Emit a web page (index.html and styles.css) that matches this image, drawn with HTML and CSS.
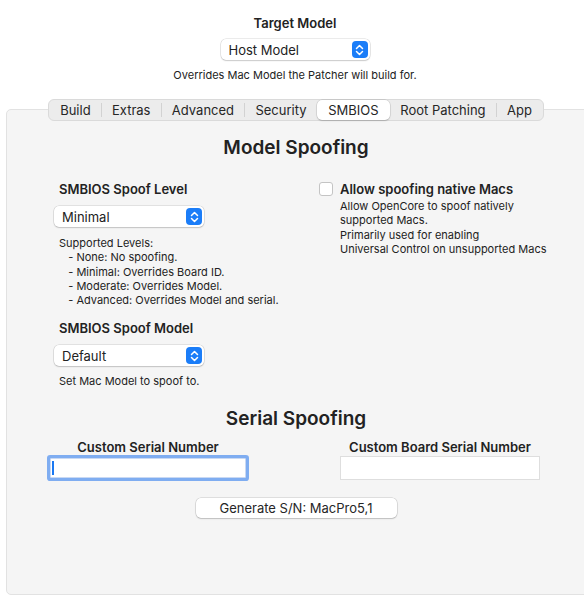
FILE: index.html
```html
<!DOCTYPE html>
<html>
<head>
<meta charset="utf-8">
<link rel="stylesheet" href="styles.css">
</head>
<body>
<div class="top">
  <div class="title">Target Model</div>
  <div class="select host">
    <span class="sel-text">Host Model</span>
    <span class="stepper"><svg width="9" height="12" viewBox="0 0 9 12"><path d="M1.5 4.5 L4.5 1.5 L7.5 4.5 M1.5 7.5 L4.5 10.5 L7.5 7.5" fill="none" stroke="#fff" stroke-width="1.5" stroke-linecap="round" stroke-linejoin="round"/></svg></span>
  </div>
  <div class="note">Overrides Mac Model the Patcher will build for.</div>
</div>
<div class="tabs-wrap">
  <div class="tabs">
    <span class="tab">Build</span><span class="sep"></span>
    <span class="tab">Extras</span><span class="sep"></span>
    <span class="tab">Advanced</span><span class="sep"></span>
    <span class="tab">Security</span>
    <span class="tab active">SMBIOS</span>
    <span class="tab">Root Patching</span><span class="sep"></span>
    <span class="tab">App</span>
  </div>
</div>
<div class="panel">
  <h2 class="section">Model Spoofing</h2>
  <div class="cols">
    <div class="col-left">
      <div class="label">SMBIOS Spoof Level</div>
      <div class="select small s1">
        <span class="sel-text">Minimal</span>
        <span class="stepper"><svg width="9" height="12" viewBox="0 0 9 12"><path d="M1.5 4.5 L4.5 1.5 L7.5 4.5 M1.5 7.5 L4.5 10.5 L7.5 7.5" fill="none" stroke="#fff" stroke-width="1.5" stroke-linecap="round" stroke-linejoin="round"/></svg></span>
      </div>
      <div class="desc levels">Supported Levels:<br>&nbsp;&nbsp;&nbsp;- None: No spoofing.<br>&nbsp;&nbsp;&nbsp;- Minimal: Overrides Board ID.<br>&nbsp;&nbsp;&nbsp;- Moderate: Overrides Model.<br>&nbsp;&nbsp;&nbsp;- Advanced: Overrides Model and serial.</div>
      <div class="label label2">SMBIOS Spoof Model</div>
      <div class="select small s2">
        <span class="sel-text">Default</span>
        <span class="stepper"><svg width="9" height="12" viewBox="0 0 9 12"><path d="M1.5 4.5 L4.5 1.5 L7.5 4.5 M1.5 7.5 L4.5 10.5 L7.5 7.5" fill="none" stroke="#fff" stroke-width="1.5" stroke-linecap="round" stroke-linejoin="round"/></svg></span>
      </div>
      <div class="desc model-desc">Set Mac Model to spoof to.</div>
    </div>
    <div class="col-right">
      <div class="check-row">
        <span class="checkbox"></span>
        <span class="label">Allow spoofing native Macs</span>
      </div>
      <div class="desc check-desc">Allow OpenCore to spoof natively<br>supported Macs.<br>Primarily used for enabling<br>Universal Control on unsupported Macs</div>
    </div>
  </div>
  <h2 class="section section2">Serial Spoofing</h2>
  <div class="serials">
    <div class="field f1">
      <div class="flabel">Custom Serial Number</div>
      <div class="input focus"><span class="caret"></span></div>
    </div>
    <div class="field f2">
      <div class="flabel">Custom Board Serial Number</div>
      <div class="input"></div>
    </div>
  </div>
  <div class="btn-row"><button class="btn">Generate S/N: MacPro5,1</button></div>
</div>
</body>
</html>
```
FILE: styles.css
```css
html, body {
  margin: 0;
  padding: 0;
  background: #ffffff;
  overflow: hidden;
  width: 584px;
  height: 600px;
}
body {
  font-family: Inter, "Liberation Sans", Arial, sans-serif;
  color: #222;
}
.top {
  display: flex;
  flex-direction: column;
  align-items: center;
  padding-top: 15px;
  margin-left: 6px;
}
.title {
  font-weight: 600;
  font-size: 13px;
  line-height: 16px;
  height: 16px;
}
.select {
  display: flex;
  align-items: center;
  justify-content: space-between;
  background: #fff;
  border-radius: 5px;
  box-shadow: 0 0 0 0.5px rgba(0,0,0,0.16), 0 1px 1.5px rgba(0,0,0,0.14);
  height: 21px;
  box-sizing: border-box;
  padding: 0 2px 0 8px;
  font-size: 13px;
}
.select.host {
  width: 149px;
  margin-top: 8px;
}
.stepper {
  width: 16px;
  height: 17px;
  background: #1b7df8;
  border-radius: 4px;
  display: flex;
  align-items: center;
  justify-content: center;
}
.note {
  font-size: 11px;
  line-height: 14px;
  margin-top: 8px;
}
.tabs-wrap {
  display: flex;
  justify-content: center;
  margin-top: 17px;
  margin-left: 8px;
  position: relative;
  z-index: 1;
  margin-bottom: -12px;
}
.tabs {
  display: flex;
  align-items: center;
  height: 22px;
  box-sizing: border-box;
  background: #ececec;
  border: 1px solid #dadada;
  border-radius: 6px;
  padding: 0 1px;
  font-size: 13px;
}
.tab {
  padding: 0 10.2px;
  line-height: 18px;
  height: 18px;
  color: #262626;
}
.tab.active {
  background: #fff;
  border-radius: 5px;
  box-shadow: 0 0 0 0.5px rgba(0,0,0,0.15), 0 1px 1.5px rgba(0,0,0,0.15);
  padding: 0 11.5px;
  height: 20px;
  line-height: 20px;
}
.sep {
  width: 1px;
  height: 14px;
  background: #d2d2d2;
}
.panel {
  margin-left: 6px;
  width: 600px;
  height: 486px;
  box-sizing: border-box;
  background: #f5f5f5;
  border: 1px solid #e2e2e2;
  border-radius: 5px;
  padding-top: 26px;
}
.section {
  margin: 0;
  font-size: 19px;
  font-weight: 600;
  line-height: 24px;
  text-align: center;
  width: 578px;
  color: #222;
}
.cols {
  display: flex;
  margin-top: 21px;
}
.col-left {
  width: 260px;
  padding-left: 47px;
  display: flex;
  flex-direction: column;
  align-items: flex-start;
}
.col-right {
  padding-left: 5px;
}
.label {
  font-size: 13px;
  font-weight: 600;
  line-height: 16px;
  margin-left: 5px;
}
.select.small {
  width: 150px;
}
.s1 {
  margin-top: 9px;
}
.s2 {
  margin-top: 9px;
}
.desc {
  font-size: 11px;
  line-height: 14.25px;
  margin-left: 5px;
}
.levels {
  margin-top: 9px;
}
.model-desc {
  margin-top: 8px;
}
.label2 {
  margin-top: 13px;
}
.check-row {
  display: flex;
  align-items: center;
}
.checkbox {
  width: 12px;
  height: 12px;
  border: 1px solid #c4c4c4;
  border-radius: 3px;
  background: #fff;
}
.check-row .label {
  margin-left: 7px;
}
.check-desc {
  margin-left: 21px;
  margin-top: 2px;
}
.section2 {
  margin-top: 18px;
}
.serials {
  display: flex;
  margin-top: 8px;
}
.field {
  display: flex;
  flex-direction: column;
  align-items: center;
}
.f1 {
  margin-left: 40px;
  width: 202px;
}
.f2 {
  margin-left: 91px;
  width: 200px;
}
.flabel {
  font-size: 13px;
  font-weight: 600;
  line-height: 16px;
}
.input {
  width: 200px;
  height: 24px;
  box-sizing: border-box;
  background: #fff;
  border: 1px solid #dedede;
  margin-top: 1px;
  display: flex;
  align-items: center;
}
.input.focus {
  width: 196px;
  height: 20px;
  margin-top: 3px;
  border: 1px solid #c9d9f3;
  box-shadow: 0 0 0 3px #7fadf1;
  border-radius: 1px;
  padding-left: 1px;
}
.caret {
  width: 2px;
  height: 14px;
  background: #1a78f2;
}
.btn-row {
  display: flex;
  justify-content: center;
  width: 578px;
  margin-top: 18px;
}
.btn {
  font-family: Inter, "Liberation Sans", Arial, sans-serif;
  font-size: 13px;
  color: #262626;
  width: 201px;
  height: 20px;
  background: #fff;
  border: none;
  border-radius: 5px;
  box-shadow: 0 0 0 0.5px rgba(0,0,0,0.18), 0 1px 1.5px rgba(0,0,0,0.15);
  padding: 0;
}
```
